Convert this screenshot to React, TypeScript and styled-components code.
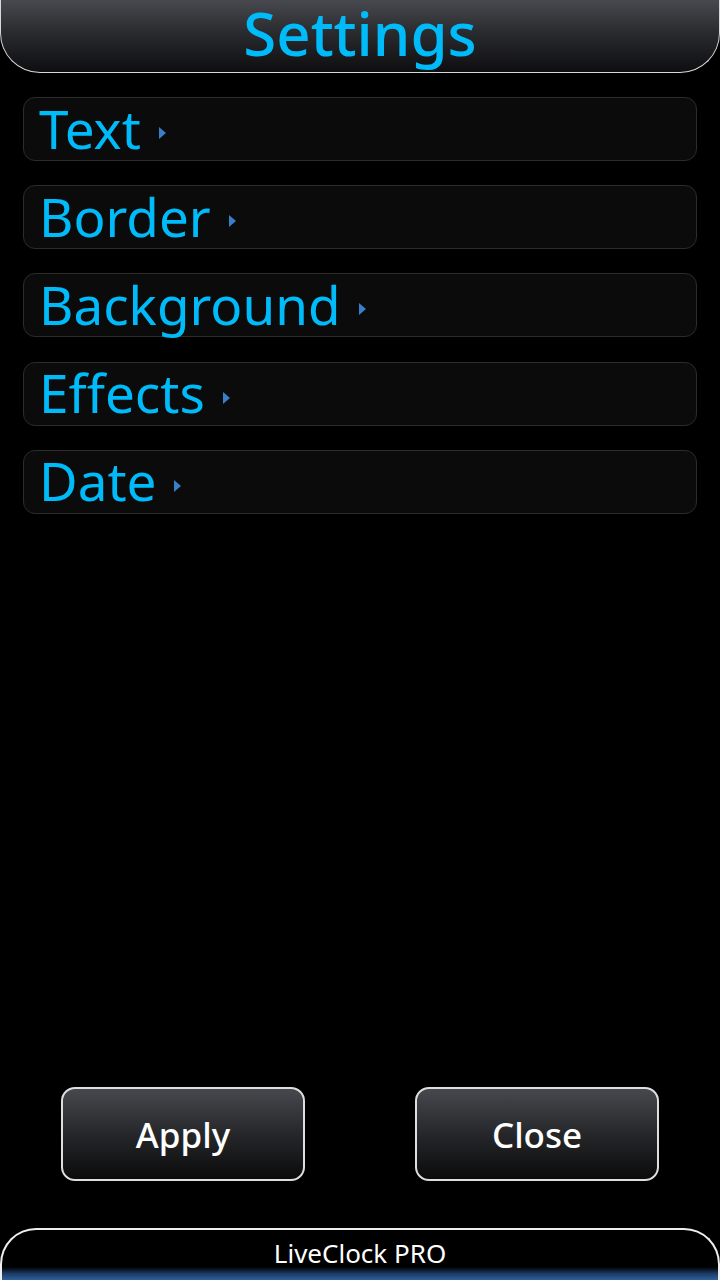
import React from 'react';
import styled, { createGlobalStyle } from 'styled-components';

const GlobalStyle = createGlobalStyle`
  html, body {
    margin: 0;
    padding: 0;
    background: #000;
  }
  body {
    font-family: 'Noto Sans', 'DejaVu Sans', sans-serif;
  }
`;

const Screen = styled.div`
  width: 720px;
  height: 1280px;
  display: flex;
  flex-direction: column;
  background: #000;
  overflow: hidden;
`;

const Header = styled.header`
  height: 72px;
  box-sizing: content-box;
  display: flex;
  justify-content: center;
  align-items: flex-start;
  background: linear-gradient(to bottom, #47494e 0%, #2a2b2f 45%, #0e0e10 100%);
  border: 1.5px solid #d8d8d8;
  border-top: none;
  border-radius: 0 0 40px 40px;
`;

const Title = styled.h1`
  margin: 0;
  font-size: 60px;
  line-height: 66px;
  font-weight: 500;
  color: #00bbf9;
`;

const Menu = styled.ul`
  list-style: none;
  margin: 0;
  padding: 24px 23px 0;
  display: flex;
  flex-direction: column;
  gap: 24.2px;
  flex: 1;
`;

const MenuRow = styled.li`
  display: flex;
  align-items: center;
  gap: 18px;
  padding: 2px 0 4px 15px;
  box-sizing: content-box;
  height: 56px;
  background: #0b0b0b;
  border: 1px solid #2c2c2c;
  border-radius: 12px;
`;

const Label = styled.span`
  font-size: 53px;
  line-height: 1;
  color: #00bbf9;
`;

const Arrow = styled.span`
  width: 0;
  height: 0;
  margin-top: 10px;
  border-top: 6px solid transparent;
  border-bottom: 6px solid transparent;
  border-left: 7px solid #3a7ec9;
`;

const Actions = styled.div`
  display: flex;
  justify-content: space-between;
  padding: 0 61px;
  margin-bottom: 47px;
`;

const ActionButton = styled.button`
  width: 244px;
  height: 94px;
  box-sizing: border-box;
  border: 2px solid #dedede;
  border-radius: 14px;
  background: linear-gradient(to bottom, #46484d 0%, #26272a 50%, #0b0b0c 100%);
  color: #fff;
  font-family: 'Noto Sans', sans-serif;
  font-size: 35px;
  font-weight: 500;
  line-height: 1;
  cursor: pointer;
`;

const Footer = styled.footer`
  height: 52px;
  box-sizing: border-box;
  display: flex;
  justify-content: center;
  padding-top: 8px;
  border: 2px solid #eeeeee;
  border-bottom: none;
  border-radius: 36px 36px 0 0;
  background: linear-gradient(to bottom, #000 0%, #000 74%, #1d3e68 88%, #2f5f98 100%);
`;

const FooterText = styled.span`
  font-size: 26px;
  line-height: 1.2;
  color: #fff;
`;

const items = ['Text', 'Border', 'Background', 'Effects', 'Date'];

const App: React.FC = () => (
  <>
    <GlobalStyle />
    <Screen>
      <Header>
        <Title>Settings</Title>
      </Header>
      <Menu>
        {items.map((item) => (
          <MenuRow key={item}>
            <Label>{item}</Label>
            <Arrow />
          </MenuRow>
        ))}
      </Menu>
      <Actions>
        <ActionButton>Apply</ActionButton>
        <ActionButton>Close</ActionButton>
      </Actions>
      <Footer>
        <FooterText>LiveClock PRO</FooterText>
      </Footer>
    </Screen>
  </>
);

export default App;
